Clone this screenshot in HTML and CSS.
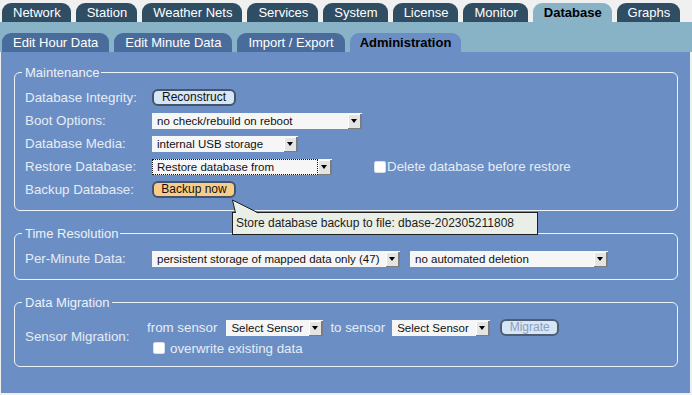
FILE: index.html
```html
<!DOCTYPE html>
<html lang="en">
<head>
    <meta charset="UTF-8">
    <title>Database - Administration</title>
    <link rel="stylesheet" href="styles.css">
</head>
<body>
    <nav class="tabs-main">
        <a class="tab">Network</a>
        <a class="tab">Station</a>
        <a class="tab">Weather Nets</a>
        <a class="tab">Services</a>
        <a class="tab">System</a>
        <a class="tab">License</a>
        <a class="tab">Monitor</a>
        <a class="tab active">Database</a>
        <a class="tab">Graphs</a>
    </nav>
    <nav class="tabs-sub">
        <a class="subtab">Edit Hour Data</a>
        <a class="subtab">Edit Minute Data</a>
        <a class="subtab">Import / Export</a>
        <a class="subtab active">Administration</a>
    </nav>
    <main class="panel">
        <fieldset class="group">
            <legend>Maintenance</legend>
            <div class="form-grid">
                <div class="label">Database Integrity:</div>
                <div class="field"><button class="btn">Reconstruct</button></div>

                <div class="label">Boot Options:</div>
                <div class="field">
                    <div class="select w-boot"><span class="value">no check/rebuild on reboot</span><span class="arrow"></span></div>
                </div>

                <div class="label">Database Media:</div>
                <div class="field">
                    <div class="select w-media"><span class="value">internal USB storage</span><span class="arrow"></span></div>
                </div>

                <div class="label">Restore Database:</div>
                <div class="field">
                    <div class="select w-restore"><span class="value focus">Restore database from</span><span class="arrow"></span></div>
                    <label class="check delete-check"><span class="box"></span>Delete database before restore</label>
                </div>

                <div class="label">Backup Database:</div>
                <div class="field">
                    <span class="tip-anchor">
                        <button class="btn btn-backup">Backup now</button>
                        <span class="tooltip">
                            <svg class="tail" width="28" height="15" viewBox="0 0 28 15">
                                <polygon points="0.5,1 3.5,14.5 26.5,14.5" fill="#e9eee7"/>
                                <polyline points="3.5,14 0.5,1 26.5,14" fill="none" stroke="#1e1e1e" stroke-width="1"/>
                            </svg>
                            Store database backup to file: dbase-202305211808
                        </span>
                    </span>
                </div>
            </div>
        </fieldset>

        <fieldset class="group">
            <legend>Time Resolution</legend>
            <div class="form-grid">
                <div class="label">Per-Minute Data:</div>
                <div class="field">
                    <div class="select w-pm1"><span class="value">persistent storage of mapped data only (47)</span><span class="arrow"></span></div>
                    <div class="select w-pm2"><span class="value">no automated deletion</span><span class="arrow"></span></div>
                </div>
            </div>
        </fieldset>

        <fieldset class="group">
            <legend>Data Migration</legend>
            <div class="form-grid migration">
                <div class="label">Sensor Migration:</div>
                <div class="field-stack">
                    <div class="line">
                        <span class="text">from sensor</span>
                        <div class="select w-sensor"><span class="value">Select Sensor</span><span class="arrow"></span></div>
                        <span class="text to">to sensor</span>
                        <div class="select w-sensor2"><span class="value">Select Sensor</span><span class="arrow"></span></div>
                        <button class="btn btn-migrate" disabled>Migrate</button>
                    </div>
                    <label class="check overwrite"><span class="box"></span>overwrite existing data</label>
                </div>
            </div>
        </fieldset>
    </main>
</body>
</html>
```

FILE: styles.css
```css
/* Global Styles */
body {
    margin: 0;
    background-color: #f0f0f0;
    font-family: "Liberation Sans", Arial, sans-serif;
    font-size: 13px;
    height: 395px;
    overflow: hidden;
}

/* Top tabs */
.tabs-main {
    display: flex;
    gap: 5px;
    padding: 3px 0 0 2px;
    height: 19px;
}

.tab {
    display: block;
    height: 19px;
    line-height: 19px;
    padding: 0 10px 0 11px;
    background-color: #2f4d63;
    color: #ffffff;
    border-radius: 9px 9px 0 0;
}

.tab.active {
    background-color: #88b2c5;
    color: #000000;
    font-weight: bold;
}

/* Second row */
.tabs-sub {
    display: flex;
    gap: 5px;
    height: 19px;
    padding: 11px 0 0 2px;
    background-color: #88b2c5;
}

.subtab {
    display: block;
    height: 19px;
    line-height: 19px;
    padding: 0 11px;
    background-color: #4a6c9c;
    color: #ffffff;
    border-radius: 9px 9px 0 0;
}

.subtab.active {
    background-color: #6b8fc4;
    color: #000000;
    font-weight: bold;
    padding: 0 10px;
}

/* Main panel */
.panel {
    position: relative;
    box-sizing: border-box;
    height: 341px;
    margin: 0 2px 0 1px;
    padding: 13px 12px 0 13px;
    background-color: #6b8fc4;
}

.group {
    margin: 0 0 15px 0;
    padding: 6px 10px 9px 10px;
    border: 1px solid #eef3fa;
    border-radius: 6px;
}

.group legend {
    margin-left: -3px;
    padding: 0 2px 0 3px;
    line-height: 15px;
    color: #edf1f8;
}

.form-grid {
    display: grid;
    grid-template-columns: 122px 1fr;
    grid-auto-rows: 23px;
    align-items: center;
}

.label {
    font-size: 13.33px;
    color: #e6ecf6;
    white-space: nowrap;
}

.field {
    display: flex;
    align-items: center;
}

/* Buttons */
.btn {
    box-sizing: border-box;
    width: 84px;
    height: 17px;
    margin: 0 0 0 5px;
    padding: 0;
    border: 2px solid #46546a;
    border-radius: 6px;
    background-color: #d5e6f9;
    color: #111111;
    font-family: inherit;
    font-size: 12px;
    line-height: 13px;
}

.btn-backup {
    margin: 0;
    background-color: #f8cd89;
}

.btn-migrate {
    width: 59px;
    margin-left: 10px;
    background-color: #d6e6f9;
    border-color: #4f5d73;
    color: #8d9eb6;
}

/* Fake selects */
.select {
    display: flex;
    box-sizing: border-box;
    height: 16px;
    margin-left: 5px;
    background-color: #f6f6f6;
    font-size: 11.5px;
    color: #111111;
}

.select .value {
    flex: 1;
    box-sizing: border-box;
    height: 16px;
    line-height: 16px;
    padding-left: 5px;
    white-space: nowrap;
    overflow: hidden;
}

.select .value.focus {
    border: 1px dotted #111111;
    line-height: 14px;
    padding-left: 4px;
}

.select .arrow {
    position: relative;
    box-sizing: border-box;
    width: 14px;
    height: 15px;
    margin-top: 1px;
    background-color: #e4e4e4;
    border-right: 2px solid #7c7c7c;
    border-bottom: 1px solid #7c7c7c;
    box-shadow: inset 1px 1px #ffffff;
}

.select .arrow::after {
    content: "";
    position: absolute;
    left: 3px;
    top: 5px;
    border-left: 3.5px solid transparent;
    border-right: 3.5px solid transparent;
    border-top: 4px solid #000000;
}

.w-boot { width: 210px; }
.w-media { width: 146px; }
.w-restore { width: 180px; }
.w-pm1 { width: 248px; }
.w-pm2 { width: 198px; margin-left: 10px; }
.w-sensor { width: 97px; margin-left: 9px; }
.w-sensor2 { width: 98px; margin-left: 7px; }

/* Checkboxes */
.check {
    display: flex;
    align-items: center;
    font-size: 13.33px;
    color: #e6ecf6;
}

.check .box {
    box-sizing: border-box;
    width: 12px;
    height: 12px;
    margin-right: 1px;
    background-color: #ffffff;
    border: 1px solid #d8dde6;
    border-radius: 2px;
}

.delete-check {
    margin-left: 42px;
}

/* Migration block */
.migration {
    grid-auto-rows: 41px;
}

.field-stack {
    display: flex;
    flex-direction: column;
}

.line {
    display: flex;
    align-items: center;
    height: 23px;
}

.text {
    font-size: 13.33px;
    color: #e6ecf6;
}

.text.to {
    margin-left: 7px;
}

.overwrite {
    height: 18px;
    margin-left: 6px;
}

.overwrite .box {
    margin-right: 5px;
}

/* Tooltip */
.tip-anchor {
    position: relative;
    display: inline-block;
    height: 17px;
    margin-left: 5px;
}

.tooltip {
    position: absolute;
    left: 80px;
    top: 31px;
    box-sizing: border-box;
    width: 306px;
    height: 23px;
    padding-left: 3px;
    font-size: 12px;
    line-height: 21px;
    background-color: #e9eee7;
    border: 1px solid #1e1e1e;
    color: #1c1c1c;
    white-space: nowrap;
    z-index: 2;
}

.tooltip .tail {
    position: absolute;
    left: -1px;
    top: -14px;
}
```
